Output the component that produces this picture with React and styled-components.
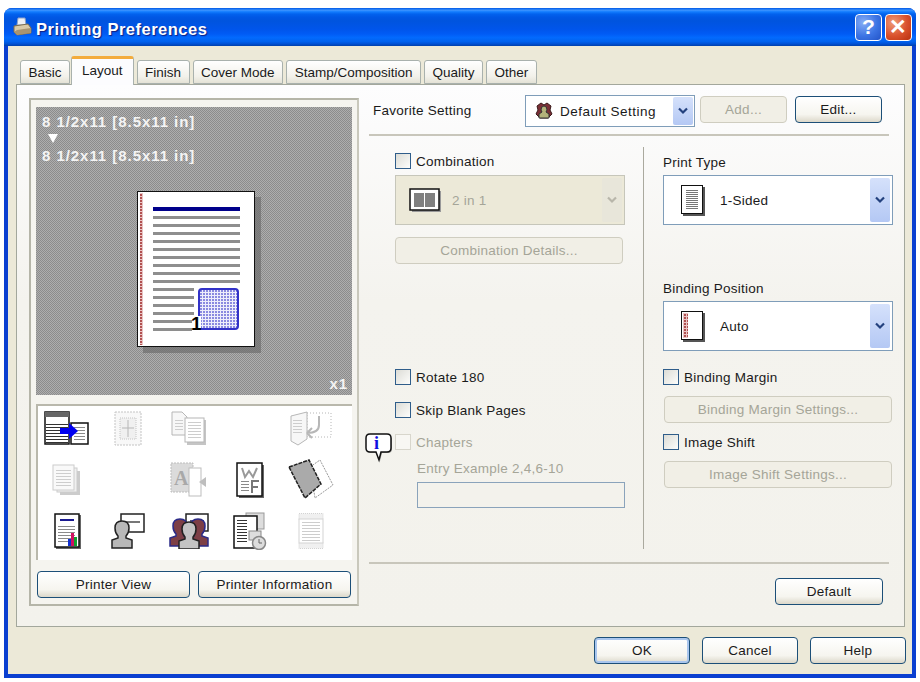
import React from 'react';
import styled, { createGlobalStyle } from 'styled-components';

const GlobalStyle = createGlobalStyle`
  html, body { margin: 0; padding: 0; background: #fff; }
  body { font-family: "Liberation Sans", Arial, sans-serif; font-size: 13.5px; letter-spacing: 0.25px; color: #1a1a1a; }
  * { box-sizing: border-box; }
`;

const Page = styled.div`
  width: 920px;
  height: 682px;
  padding: 8px 4px 4px 4px;
`;

const Window = styled.div`
  width: 912px;
  height: 670px;
  display: flex;
  flex-direction: column;
  border-radius: 8px 8px 0 0;
  overflow: hidden;
  background: #0a3fd0;
`;

const TitleBar = styled.div`
  height: 38px;
  flex: none;
  display: flex;
  align-items: center;
  padding: 0 4px 0 8px;
  background: linear-gradient(#0058e6 0, #3a93ff 6%, #127dff 10%, #0262ee 16%, #0057e5 24%, #0054de 34%, #0055eb 56%, #005bf5 68%, #026afe 78%, #0062ef 88%, #0052d6 94%, #0040ab 100%);
`;

const TitleText = styled.div`
  margin: 5px 0 0 4px;
  flex: 1;
  color: #fff;
  font-weight: 700;
  font-size: 16.5px;
  letter-spacing: 0.5px;
  text-shadow: 1px 1px 1px #0f1f80;
`;

const CaptionButton = styled.div`
  width: 27px;
  height: 27px;
  margin-left: 3px;
  border: 1px solid #fff;
  border-radius: 4px;
  display: flex;
  align-items: center;
  justify-content: center;
  color: #fff;
  font-weight: 700;
  font-size: 21px;
  background: ${(p) => (p.$close
    ? 'radial-gradient(circle at 30% 30%, #ef9a78, #d9512c 55%, #b8300f)'
    : 'radial-gradient(circle at 30% 30%, #86aef5, #3c74e4 55%, #2354c8)')};
`;

const Body = styled.div`
  flex: 1;
  margin: 0 4px 4px 4px;
  min-height: 0;
  background: #ece9d8;
  display: flex;
  flex-direction: column;
  padding: 10px 7px 0 8px;
`;

const TabRow = styled.div`
  display: flex;
  align-items: flex-end;
  height: 28px;
  padding-left: 4px;
  position: relative;
  z-index: 1;
`;

const Tab = styled.div`
  height: ${(p) => (p.$active ? '29px' : '24px')};
  margin-bottom: ${(p) => (p.$active ? '-1px' : '0')};
  margin-left: ${(p) => (p.$active ? '1px' : '3px')};
  padding: ${(p) => (p.$active ? '4px 10px 0' : '1px 7.5px 0')};
  display: flex;
  align-items: ${(p) => (p.$active ? 'flex-start' : 'center')};
  letter-spacing: 0;
  white-space: nowrap;
  background: ${(p) => (p.$active ? '#fcfcfe' : 'linear-gradient(#fff, #f2f1ea 70%, #e4e2d6)')};
  border: 1px solid #a9b1ad;
  border-bottom: ${(p) => (p.$active ? 'none' : '1px solid #a9b1ad')};
  border-top: ${(p) => (p.$active ? '3px solid #f3ac3c' : '1px solid #a9b1ad')};
  border-radius: 3px 3px 0 0;

  &:first-child {
    margin-left: 0;
  }
`;

const Panel = styled.div`
  width: 889px;
  height: 543px;
  border: 1px solid #a3a79c;
  background: linear-gradient(#fdfdfe, #f4f3ee 40%, #f3f2ec);
  padding: 13px 0 0 12px;
  display: flex;
`;

const LeftGroup = styled.div`
  width: 330px;
  height: 508px;
  flex: none;
  border: 2px solid #b5b5a8;
  border-right-color: #c9c8bc;
  background: #f5f4ef;
  padding: 7px 5px 0 5px;
  display: flex;
  flex-direction: column;
`;

const Preview = styled.div`
  width: 316px;
  height: 288px;
  flex: none;
  padding: 7px 4px 4px 6px;
  display: flex;
  flex-direction: column;
  color: #f4f4f4;
  font-weight: 700;
  font-size: 15px;
  letter-spacing: 0.95px;
  background-color: #9c9c9c;
  background-image: repeating-conic-gradient(#8c8c8c 0 25%, #aeaeae 0 50%);
  background-size: 2px 2px;
`;

const PreviewLine = styled.div`
  height: 15px;
  line-height: 15px;
`;

const Arrow = styled.div`
  width: 0;
  height: 0;
  margin: 5px 0 5px 6px;
  border-left: 5px solid transparent;
  border-right: 5px solid transparent;
  border-top: 9px solid #fff;
`;

const PreviewSheet = styled.div`
  flex: 1;
  padding: 28px 0 0 95px;
`;

const PreviewCorner = styled.div`
  align-self: flex-end;
  line-height: 14px;
`;

const IconGrid = styled.div`
  width: 316px;
  height: 156px;
  flex: none;
  margin-top: 9px;
  background: #fff;
  border-top: 2px solid #b9b8ac;
  border-left: 2px solid #b9b8ac;
  display: grid;
  grid-template-columns: repeat(5, 61px);
  grid-auto-rows: 51px;
`;

const IconCell = styled.div`
  display: flex;
  align-items: center;
  justify-content: center;
  padding: 0 3px 6px 0;
  opacity: ${(p) => (p.$dim ? 0.42 : 1)};
`;

const LeftButtons = styled.div`
  display: flex;
  gap: 8px;
  margin: 11px 0 0 1px;
`;

const Button = styled.div`
  width: ${(p) => p.$w}px;
  height: 27px;
  flex: none;
  margin: ${(p) => p.$mt || 0}px 0 0 ${(p) => p.$ml || 0}px;
  border: 1px solid ${(p) => (p.$off ? '#cfcdc0' : '#1c4f78')};
  border-radius: 4px;
  display: flex;
  align-items: center;
  justify-content: center;
  color: ${(p) => (p.$off ? '#a5a598' : '#1a1a1a')};
  background: ${(p) => (p.$off ? '#f1efe6' : 'linear-gradient(#fff, #f6f5ef 70%, #dcd8ca)')};
  box-shadow: ${(p) => (p.$focus ? 'inset 0 0 0 2px #a9c6ee' : 'none')};
`;

const RightArea = styled.div`
  width: 520px;
  margin-left: 10px;
  margin-top: -1px;
  display: flex;
  flex-direction: column;
`;

const FavRow = styled.div`
  height: 39px;
  flex: none;
  display: flex;
  align-items: flex-start;
  border-bottom: 2px solid #c8c6bb;
`;

const FavLabel = styled.div`
  width: 156px;
  padding: 6px 0 0 4px;
  white-space: nowrap;
`;

const FavCombo = styled.div`
  width: 170px;
  height: 32px;
  margin-top: -2px;
  border: 1px solid #7f9db9;
  background: #fff;
  display: flex;
  align-items: center;
  padding: 1px 1px 1px 9px;
`;

const FavText = styled.span`
  flex: 1;
  margin-left: 7px;
  letter-spacing: 0.5px;
  white-space: nowrap;
`;

const DropButton = styled.div`
  width: 20px;
  height: 100%;
  flex: none;
  display: flex;
  align-items: center;
  justify-content: center;
  border-radius: 2px;
  background: ${(p) => (p.$off ? '#e8e6da' : 'linear-gradient(#d5e1fb, #b4c8f4)')};
`;

const FavButtons = styled.div`
  display: flex;
  gap: 8px;
  margin-left: 5px;
  margin-top: -1px;
`;

const Columns = styled.div`
  height: 402px;
  flex: none;
  margin-top: 11px;
  display: flex;
`;

const ColA = styled.div`
  width: 275px;
  flex: none;
  padding: 6px 0 0 26px;
  border-right: 1px solid #aaa99e;
`;

const ColB = styled.div`
  width: 245px;
  flex: none;
  padding: 8px 0 0 19px;
`;

const CheckRow = styled.div`
  display: flex;
  align-items: center;
  height: 16px;
  margin-top: ${(p) => p.$mt || 0}px;
  gap: 5px;
  color: ${(p) => (p.$off ? '#a5a598' : '#1a1a1a')};
`;

const Box = styled.span`
  width: 16px;
  height: 16px;
  flex: none;
  border: 1px solid ${(p) => (p.$off ? '#d8d6cc' : '#2f5d8a')};
  background: ${(p) => (p.$off ? '#f8f7f3' : 'linear-gradient(135deg, #dcdcd6, #fdfdfb)')};
`;

const BigCombo = styled.div`
  width: 230px;
  height: 50px;
  flex: none;
  margin-top: ${(p) => p.$mt || 0}px;
  border: 1px solid ${(p) => (p.$off ? '#c6c6ba' : '#7f9db9')};
  background: ${(p) => (p.$off ? '#ece9d8' : '#fff')};
  padding: 2px;
  display: flex;
  align-items: center;
  color: ${(p) => (p.$off ? '#a5a598' : '#1a1a1a')};
`;

const ComboIcon = styled.div`
  width: 54px;
  flex: none;
  display: flex;
  justify-content: center;
`;

const ComboText = styled.span`
  flex: 1;
`;

const Label = styled.div`
  height: 16px;
  line-height: 16px;
  margin-top: ${(p) => p.$mt || 0}px;
  color: ${(p) => (p.$off ? '#a5a598' : '#1a1a1a')};
  padding-left: ${(p) => p.$indent || 0}px;
`;

const ChaptersRow = styled.div`
  position: relative;
`;

const InfoBadge = styled.div`
  position: absolute;
  left: -30px;
  top: -1px;
`;

const TextBox = styled.div`
  width: 208px;
  height: 26px;
  margin: 5px 0 0 22px;
  border: 1px solid #8aa3bb;
  background: #f3f2ec;
`;

const FooterRule = styled.div`
  height: 2px;
  flex: none;
  margin-top: 13px;
  background: #c8c6bb;
`;

const FooterRow = styled.div`
  display: flex;
  justify-content: flex-end;
  padding: 14px 6px 0 0;
`;

const DialogButtons = styled.div`
  display: flex;
  justify-content: flex-end;
  gap: 12px;
  margin-right: -1px;
  padding-top: 10px;
`;

const Svg = ({ w, h, children }) => (
  <svg width={w} height={h} viewBox={`0 0 ${w} ${h}`} style={{ display: 'block' }}>
    {children}
  </svg>
);

const Lines = ({ x, y, w, n, gap = 3, color = '#8a8a8a' }) => (
  <>
    {Array.from({ length: n }).map((_, i) => (
      <rect key={i} x={x} y={y + i * gap} width={w} height={1} fill={color} />
    ))}
  </>
);

const Chevron = ({ off }) => (
  <svg width="12" height="8" viewBox="0 0 12 8">
    <path d="M2 1.5 L6 5.5 L10 1.5" fill="none" stroke={off ? '#b8b6aa' : '#23417e'} strokeWidth="2.2" />
  </svg>
);

const PrinterIcon = () => (
  <Svg w={20} h={20}>
    <path d="M6 1 L13 1 L14 8 L5 8 Z" fill="#eef0f4" stroke="#8aa0c8" />
    <path d="M2 9 L16 7 L19 11 L19 16 L5 18 L2 15 Z" fill="#d8c9a8" stroke="#7d6d4e" />
    <path d="M2 15 L5 13 L19 11 L19 16 L5 18 Z" fill="#a79472" />
  </Svg>
);

const SheetPreview = () => (
  <Svg w={126} h={164}>
    <defs>
      <pattern id="bindDots" width="3" height="3" patternUnits="userSpaceOnUse">
        <rect width="3" height="3" fill="#e9c4c4" />
        <rect width="2" height="2" fill="#b05050" />
      </pattern>
      <pattern id="blueDots" width="3" height="3" patternUnits="userSpaceOnUse">
        <rect width="3" height="3" fill="#eeeefb" />
        <rect width="2" height="2" fill="#8a8ae0" />
      </pattern>
    </defs>
    <rect x="6" y="6" width="118" height="156" fill="#6e6e6e" opacity="0.7" />
    <rect x="0.5" y="0.5" width="117" height="155" fill="#fff" stroke="#111" />
    <rect x="3" y="2" width="3" height="152" fill="url(#bindDots)" />
    <rect x="16" y="16" width="87" height="4" fill="#00008b" />
    {[0, 1, 2, 3, 4, 5, 6, 7, 8].map((i) => (
      <rect key={i} x="16" y={25 + i * 8} width="87" height="3" fill="#8e8e8e" />
    ))}
    {[0, 1, 2, 3, 4, 5].map((i) => (
      <rect key={i} x="16" y={97 + i * 8} width="41" height="3" fill="#8e8e8e" />
    ))}
    <rect x="62" y="98" width="39" height="40" rx="3" fill="url(#blueDots)" stroke="#3232c8" strokeWidth="2" />
    <rect x="55" y="125" width="9" height="15" fill="#fff" />
    <text x="54" y="139" fontFamily="Liberation Sans, sans-serif" fontWeight="700" fontSize="19" fill="#000">1</text>
  </Svg>
);

const MachineIcon = () => (
  <Svg w={46} h={36}>
    <rect x="1" y="1" width="24" height="32" fill="#fff" stroke="#111" strokeWidth="1.5" />
    <rect x="1" y="1" width="24" height="5" fill="#666" />
    <Lines x={2} y={13} w={22} n={7} gap={3} color="#333" />
    <rect x="27" y="12" width="17" height="21" fill="#fff" stroke="#111" strokeWidth="1.5" />
    <Lines x={30} y={16} w={11} n={5} />
    <path d="M16 17 H25 V12 L34 20 L25 28 V23 H16 Z" fill="#0000f0" />
  </Svg>
);

const GridPageIcon = () => (
  <Svg w={28} h={36}>
    <rect x="1" y="1" width="26" height="33" fill="#f0f0f0" stroke="#777" strokeDasharray="2 1" />
    <rect x="6" y="7" width="16" height="21" fill="#ddd" stroke="#777" strokeDasharray="1 1" />
    <path d="M14 9 V26 M8 17 H20" stroke="#555" />
  </Svg>
);

const DoublePageIcon = () => (
  <Svg w={38} h={36}>
    <rect x="17" y="9" width="19" height="25" fill="#777" />
    <path d="M2 1 H12 L17 6 V24 H2 Z" fill="#eee" stroke="#555" />
    <rect x="15" y="7" width="19" height="24" fill="#fff" stroke="#555" />
    <Lines x={18} y={11} w={13} n={6} />
    <Lines x={5} y={9} w={8} n={4} />
  </Svg>
);

const RotateIcon = () => (
  <Svg w={44} h={36}>
    <rect x="18" y="2" width="24" height="24" fill="#fff" stroke="#555" strokeDasharray="1 2" />
    <path d="M2 5 L18 1 V28 L9 34 L2 30 Z" fill="#eee" stroke="#555" />
    <Lines x={4} y={9} w={9} n={5} />
    <path d="M30 5 V14 Q30 22 18 22 M18 22 L23 17 M18 22 L23 27" fill="none" stroke="#555" strokeWidth="2" />
  </Svg>
);

const StackIcon = () => (
  <Svg w={30} h={32}>
    <rect x="8" y="7" width="20" height="24" fill="#888" />
    <rect x="5" y="4" width="20" height="24" fill="#ddd" stroke="#888" />
    <rect x="1" y="1" width="21" height="25" fill="#f2f2f2" stroke="#888" />
    <Lines x={4} y={6} w={15} n={6} />
  </Svg>
);

const FontPageIcon = () => (
  <Svg w={38} h={36}>
    <rect x="1" y="1" width="22" height="29" fill="#aaa" stroke="#666" strokeDasharray="2 1" />
    <rect x="19" y="6" width="12" height="28" fill="#fff" stroke="#666" />
    <text x="4" y="23" fontFamily="Liberation Serif, serif" fontWeight="700" fontSize="20" fill="#333">A</text>
    <path d="M29 20 L36 15 V25 Z" fill="#666" />
  </Svg>
);

const WatermarkIcon = () => (
  <Svg w={28} h={36}>
    <rect x="3" y="3" width="25" height="33" fill="#666" />
    <rect x="1" y="1" width="25" height="33" fill="#fff" stroke="#111" strokeWidth="1.5" />
    <path d="M6 6 L9 15 L13 9 L17 15 L21 6" fill="none" stroke="#999" strokeWidth="2" />
    <Lines x={5} y={19} w={8} n={4} />
    <path d="M16 31 V19 H23 M16 25 H22" fill="none" stroke="#777" strokeWidth="2" />
  </Svg>
);

const CoverIcon = () => (
  <Svg w={46} h={42}>
    <path d="M22 8 L32 1 L45 26 L27 39 Z" fill="#fff" stroke="#999" strokeDasharray="2 1" />
    <path d="M1 8 L21 1 L33 25 L17 39 Z" fill="#aaa" stroke="#222" strokeWidth="1.5" strokeDasharray="4 1" />
  </Svg>
);

const ReportIcon = () => (
  <Svg w={27} h={36}>
    <rect x="2" y="2" width="25" height="34" fill="#666" />
    <rect x="1" y="1" width="24" height="33" fill="#fff" stroke="#111" strokeWidth="1.5" />
    <rect x="6" y="6" width="14" height="2" fill="#1a1a90" />
    <Lines x={4} y={13} w={17} n={6} />
    <rect x="14" y="26" width="3" height="7" fill="#1030d0" />
    <rect x="17" y="20" width="3" height="13" fill="#d01060" />
    <rect x="20" y="24" width="3" height="9" fill="#10a030" />
  </Svg>
);

const PersonShape = ({ x = 0, y = 0, fill = '#b8b8b8', stroke = '#222' }) => (
  <path
    transform={`translate(${x} ${y})`}
    d="M10 0 Q17 0 17 7 Q17 12 14 15 L14 17 L20 19 V27 H0 V19 L6 17 L6 15 Q3 12 3 7 Q3 0 10 0 Z"
    fill={fill}
    stroke={stroke}
    strokeWidth="1.5"
  />
);

const PersonIcon = () => (
  <Svg w={34} h={36}>
    <rect x="10" y="1" width="23" height="18" fill="#fff" stroke="#222" strokeWidth="1.5" />
    <rect x="14" y="8" width="15" height="2" fill="#777" />
    <PersonShape x={1} y={8} />
  </Svg>
);

const GroupIcon = () => (
  <Svg w={40} h={36}>
    <rect x="17" y="1" width="22" height="17" fill="#fff" stroke="#222" strokeWidth="1.5" />
    <rect x="21" y="7" width="14" height="2" fill="#557" />
    <PersonShape x={1} y={6} fill="#7d3f46" stroke="#2b2b88" />
    <PersonShape x={19} y={6} fill="#7d3f46" stroke="#2b2b88" />
    <PersonShape x={10} y={9} fill="#c4c4c4" stroke="#222" />
  </Svg>
);

const StampIcon = () => (
  <Svg w={34} h={38}>
    <rect x="13" y="1" width="18" height="16" fill="#ddd" stroke="#999" />
    <text x="18" y="13" fontFamily="Liberation Sans, sans-serif" fontWeight="700" fontSize="11" fill="#777">#</text>
    <rect x="1" y="4" width="23" height="32" fill="#fff" stroke="#111" strokeWidth="1.5" />
    <Lines x={4} y={8} w={10} n={8} color="#333" />
    <rect x="16" y="19" width="12" height="9" fill="#ddd" stroke="#888" />
    <circle cx="26" cy="31" r="6.5" fill="#ddd" stroke="#888" strokeWidth="1.5" />
    <path d="M26 27 V31 H29" fill="none" stroke="#666" />
  </Svg>
);

const BandIcon = () => (
  <Svg w={30} h={36}>
    <rect x="3" y="0.5" width="24" height="6" fill="#ddd" stroke="#999" strokeDasharray="1 1" />
    <rect x="3" y="29.5" width="24" height="6" fill="#ddd" stroke="#999" strokeDasharray="1 1" />
    <rect x="3" y="6" width="24" height="24" fill="#fff" stroke="#999" />
    <Lines x={6} y={9} w={18} n={7} />
  </Svg>
);

const FavIcon = () => (
  <Svg w={18} h={18}>
    <path d="M2 4 L6 1 L9 3 L12 1 L16 4 L15 8 L17 12 L13 16 H5 L1 12 L3 8 Z" fill="#7a2f36" stroke="#3a1a1a" />
    <path d="M9 4 Q12 4 12 8 L11 10 L14 12 V16 H4 V12 L7 10 L6 8 Q6 4 9 4 Z" fill="#b3b27a" stroke="#333" />
  </Svg>
);

const TwoUpIcon = () => (
  <Svg w={32} h={24}>
    <rect x="3" y="3" width="29" height="21" fill="#999" />
    <rect x="1" y="1" width="29" height="21" fill="#fff" stroke="#111" strokeWidth="1.5" />
    <rect x="5" y="5" width="10" height="14" fill="#808080" />
    <rect x="16" y="5" width="10" height="14" fill="#808080" />
  </Svg>
);

const TypeIcon = () => (
  <Svg w={24} h={31}>
    <rect x="2" y="2" width="22" height="29" fill="#555" />
    <rect x="0.5" y="0.5" width="21" height="28" fill="#fff" stroke="#111" />
    <Lines x={5} y={5} w={12} n={10} gap={2} color="#777" />
  </Svg>
);

const BindIcon = () => (
  <Svg w={24} h={31}>
    <defs>
      <pattern id="bindDotsSmall" width="3" height="3" patternUnits="userSpaceOnUse">
        <rect width="3" height="3" fill="#e9c4c4" />
        <rect width="2" height="2" fill="#b05050" />
      </pattern>
    </defs>
    <rect x="2" y="2" width="22" height="29" fill="#555" />
    <rect x="0.5" y="0.5" width="21" height="28" fill="#fff" stroke="#111" />
    <rect x="2" y="2" width="5" height="25" fill="url(#bindDotsSmall)" />
  </Svg>
);

const InfoIcon = () => (
  <Svg w={28} h={30}>
    <path d="M6 3 H23 Q27 3 27 7 V16 Q27 20 23 20 H17 L15 28 L12 20 H6 Q2 20 2 16 V7 Q2 3 6 3 Z" fill="#555" opacity="0.5" />
    <path d="M5 1 H22 Q26 1 26 5 V15 Q26 19 22 19 H16 L14 27 L11 19 H5 Q1 19 1 15 V5 Q1 1 5 1 Z" fill="#fff" stroke="#111" strokeWidth="1.5" />
    <text x="9" y="16" fontFamily="Liberation Serif, serif" fontWeight="700" fontSize="18" fill="#1010e0">i</text>
  </Svg>
);

const gridIcons = [
  [MachineIcon, false], [GridPageIcon, true], [DoublePageIcon, true], [null, false], [RotateIcon, true],
  [StackIcon, true], [null, false], [FontPageIcon, true], [WatermarkIcon, false], [CoverIcon, false],
  [ReportIcon, false], [PersonIcon, false], [GroupIcon, false], [StampIcon, false], [BandIcon, true],
];

const tabs = ['Basic', 'Layout', 'Finish', 'Cover Mode', 'Stamp/Composition', 'Quality', 'Other'];

export default function App() {
  return (
    <Page>
      <GlobalStyle />
      <Window>
        <TitleBar>
          <PrinterIcon />
          <TitleText>Printing Preferences</TitleText>
          <CaptionButton>?</CaptionButton>
          <CaptionButton $close>✕</CaptionButton>
        </TitleBar>
        <Body>
          <TabRow>
            {tabs.map((t) => (
              <Tab key={t} $active={t === 'Layout'}>{t}</Tab>
            ))}
          </TabRow>
          <Panel>
            <LeftGroup>
              <Preview>
                <PreviewLine>8 1/2x11 [8.5x11 in]</PreviewLine>
                <Arrow />
                <PreviewLine>8 1/2x11 [8.5x11 in]</PreviewLine>
                <PreviewSheet><SheetPreview /></PreviewSheet>
                <PreviewCorner>x1</PreviewCorner>
              </Preview>
              <IconGrid>
                {gridIcons.map(([Icon, dim], i) => (
                  <IconCell key={i} $dim={dim}>{Icon && <Icon />}</IconCell>
                ))}
              </IconGrid>
              <LeftButtons>
                <Button $w={153}>Printer View</Button>
                <Button $w={153}>Printer Information</Button>
              </LeftButtons>
            </LeftGroup>
            <RightArea>
              <FavRow>
                <FavLabel>Favorite Setting</FavLabel>
                <FavCombo>
                  <FavIcon />
                  <FavText>Default Setting</FavText>
                  <DropButton><Chevron /></DropButton>
                </FavCombo>
                <FavButtons>
                  <Button $w={87} $off>Add...</Button>
                  <Button $w={87}>Edit...</Button>
                </FavButtons>
              </FavRow>
              <Columns>
                <ColA>
                  <CheckRow><Box />Combination</CheckRow>
                  <BigCombo $off $mt={6}>
                    <ComboIcon><TwoUpIcon /></ComboIcon>
                    <ComboText>2 in 1</ComboText>
                    <DropButton $off><Chevron off /></DropButton>
                  </BigCombo>
                  <Button $w={228} $off $mt={12}>Combination Details...</Button>
                  <CheckRow $mt={105}><Box />Rotate 180</CheckRow>
                  <CheckRow $mt={17}><Box />Skip Blank Pages</CheckRow>
                  <ChaptersRow>
                    <InfoBadge><InfoIcon /></InfoBadge>
                    <CheckRow $mt={16} $off><Box $off />Chapters</CheckRow>
                  </ChaptersRow>
                  <Label $off $indent={22} $mt={11}>Entry Example 2,4,6-10</Label>
                  <TextBox />
                </ColA>
                <ColB>
                  <Label>Print Type</Label>
                  <BigCombo $mt={4}>
                    <ComboIcon><TypeIcon /></ComboIcon>
                    <ComboText>1-Sided</ComboText>
                    <DropButton><Chevron /></DropButton>
                  </BigCombo>
                  <Label $mt={56}>Binding Position</Label>
                  <BigCombo $mt={4}>
                    <ComboIcon><BindIcon /></ComboIcon>
                    <ComboText>Auto</ComboText>
                    <DropButton><Chevron /></DropButton>
                  </BigCombo>
                  <CheckRow $mt={18}><Box />Binding Margin</CheckRow>
                  <Button $w={228} $off $mt={11} $ml={1}>Binding Margin Settings...</Button>
                  <CheckRow $mt={11}><Box />Image Shift</CheckRow>
                  <Button $w={228} $off $mt={11} $ml={1}>Image Shift Settings...</Button>
                </ColB>
              </Columns>
              <FooterRule />
              <FooterRow><Button $w={108}>Default</Button></FooterRow>
            </RightArea>
          </Panel>
          <DialogButtons>
            <Button $w={96} $focus>OK</Button>
            <Button $w={96}>Cancel</Button>
            <Button $w={96}>Help</Button>
          </DialogButtons>
        </Body>
      </Window>
    </Page>
  );
}
